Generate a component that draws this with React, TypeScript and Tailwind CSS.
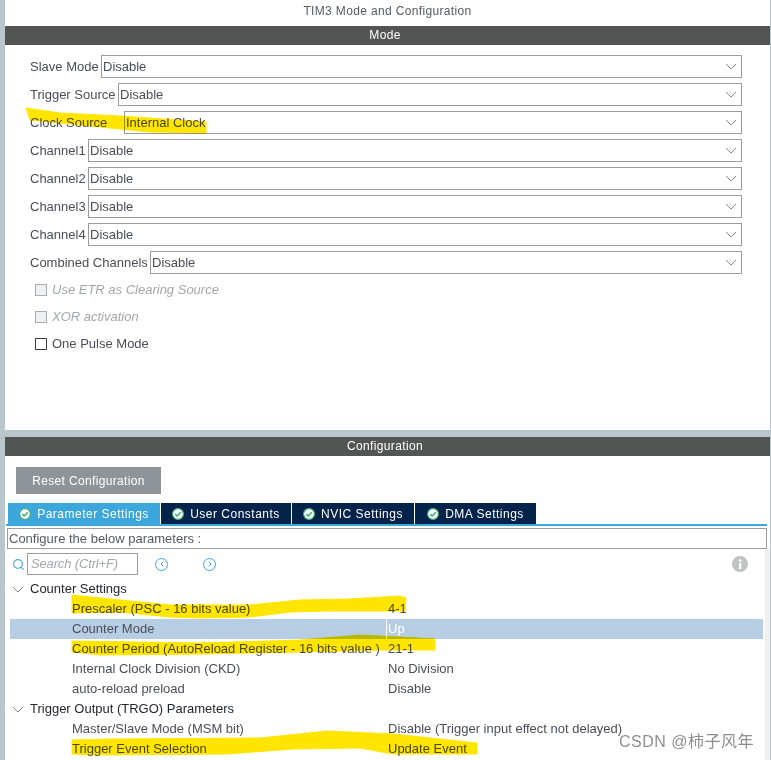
import React from 'react';
import { ChevronLeft, ChevronRight, Search } from 'lucide-react';

const modeRows = [
  { label: 'Slave Mode', value: 'Disable', w: 'w-[71px]' },
  { label: 'Trigger Source', value: 'Disable', w: 'w-[88px]' },
  { label: 'Clock Source', value: 'Internal Clock', w: 'w-[94px]' },
  { label: 'Channel1', value: 'Disable', w: 'w-[58px]' },
  { label: 'Channel2', value: 'Disable', w: 'w-[58px]' },
  { label: 'Channel3', value: 'Disable', w: 'w-[58px]' },
  { label: 'Channel4', value: 'Disable', w: 'w-[58px]' },
  { label: 'Combined Channels', value: 'Disable', w: 'w-[120px]' },
];

const tree = [
  { group: 'Counter Settings' },
  { name: 'Prescaler (PSC - 16 bits value)', value: '4-1' },
  { name: 'Counter Mode', value: 'Up', selected: true },
  { name: 'Counter Period (AutoReload Register - 16 bits value )', value: '21-1' },
  { name: 'Internal Clock Division (CKD)', value: 'No Division' },
  { name: 'auto-reload preload', value: 'Disable' },
  { group: 'Trigger Output (TRGO) Parameters' },
  { name: 'Master/Slave Mode (MSM bit)', value: 'Disable (Trigger input effect not delayed)' },
  { name: 'Trigger Event Selection', value: 'Update Event' },
];

const tabs = [
  { label: 'Parameter Settings', w: 'w-[152px]', active: true },
  { label: 'User Constants', w: 'w-[130px]' },
  { label: 'NVIC Settings', w: 'w-[122px]' },
  { label: 'DMA Settings', w: 'w-[121px]' },
];

function CheckBadge() {
  return (
    <svg width="12" height="12" viewBox="0 0 12 12" className="shrink-0">
      <circle cx="6" cy="6" r="5.4" fill="#ffffff" stroke="#3fae74" strokeWidth="1.2" />
      <path d="M3.2 6.1 L5.2 8 L8.8 4.3" fill="none" stroke="#3fae74" strokeWidth="1.6" />
    </svg>
  );
}

function Caret({ className }: { className?: string }) {
  return (
    <svg width="12" height="7" viewBox="0 0 12 7" className={className} fill="none" stroke="#85888c" strokeWidth="1">
      <path d="M1 1 L6 6 L11 1" />
    </svg>
  );
}

function PanelHeader({ title }: { title: string }) {
  return (
    <div className="h-[19px] bg-[#535554] text-white text-[12px] tracking-[0.35px] leading-[19px] text-center pr-[5px]">{title}</div>
  );
}

function Check({ label, disabled }: { label: string; disabled?: boolean }) {
  return (
    <div className="flex h-[27px] items-center pl-[30px] gap-[5px]">
      <div className={disabled ? 'w-[12px] h-[12px] border border-[#a9adb1] bg-[#eff0f1]' : 'w-[12px] h-[12px] border border-[#3d3f42] bg-white'} />
      <span className={disabled ? 'italic text-[#a3a7ab]' : 'text-[#4a4e5a]'}>{label}</span>
    </div>
  );
}

export default function App() {
  return (
    <div className="relative w-[771px] h-[760px] overflow-hidden bg-[#b9c7cd] pl-[5px] pr-px text-[13px] text-[#4a4e5a] font-['Liberation_Sans',Arial,sans-serif]">
      <section className="h-[430px] bg-white">
        <div className="h-[26px] leading-[23px] text-center text-[#555a63] text-[12px] tracking-[0.35px]">TIM3 Mode and Configuration</div>
        <PanelHeader title="Mode" />
        <div className="pt-[10px] pl-[25px] pr-[28px]">
          <div className="flex flex-col gap-[5px]">
            {modeRows.map((row) => (
              <div key={row.label} className="flex h-[23px] items-center">
                <span className={`${row.w} shrink-0 whitespace-nowrap`}>{row.label}</span>
                <div className="flex-1 h-[23px] border border-[#9a9da0] flex items-center justify-between pl-[1px] pr-[4px]">
                  <span>{row.value}</span>
                  <Caret />
                </div>
              </div>
            ))}
          </div>
        </div>
        <div className="pt-[2px]">
          <Check label="Use ETR as Clearing Source" disabled />
          <Check label="XOR activation" disabled />
          <Check label="One Pulse Mode" />
        </div>
      </section>

      <section className="mt-[7px] h-[323px] bg-white">
        <PanelHeader title="Configuration" />
        <div className="pt-[11px] pl-[11px]">
          <button className="block w-[145px] h-[27px] bg-[#8f9499] text-white tracking-[0.35px] text-[12px]">Reset Configuration</button>
        </div>
        <div className="flex mt-[9px] ml-[3px] gap-px">
          {tabs.map((tab) => (
            <div
              key={tab.label}
              className={`${tab.w} h-[21px] flex items-center justify-center gap-[6px] text-white text-[12px] tracking-[0.5px] ${tab.active ? 'bg-[#3ba7dc]' : 'bg-[#03234b]'}`}
            >
              <CheckBadge />
              {tab.label}
            </div>
          ))}
        </div>
        <div className="ml-[1px] mr-[3px] h-[2px] bg-[#3ba7dc]" />
        <div className="mt-[2px] mx-[2px] mr-[3px] h-[21px] border border-[#9a9da0] leading-[19px] pl-[1px] text-[#555a63]">Configure the below parameters :</div>

        <div className="flex h-[211px]">
          <div className="flex-1 min-w-0">
            <div className="flex items-center h-[22px] mt-[4px] ml-[8px]">
              <Search size={13} strokeWidth={2} className="text-[#3ba7dc] mr-[1px] -ml-px" />
              <div className="ml-px w-[111px] h-[22px] border border-[#9a9da0] leading-[20px] pl-[3px] italic text-[#a3a7ab] tracking-[-0.15px]">Search (Ctrl+F)</div>
              <div className="ml-[17px] w-[13px] h-[13px] rounded-full border-[1.5px] border-[#3ba7dc] flex items-center justify-center">
                <ChevronLeft size={8} strokeWidth={3} className="text-[#3ba7dc]" />
              </div>
              <div className="ml-[35px] w-[13px] h-[13px] rounded-full border-[1.5px] border-[#3ba7dc] flex items-center justify-center">
                <ChevronRight size={8} strokeWidth={3} className="text-[#3ba7dc]" />
              </div>
              <svg width="16" height="16" viewBox="0 0 16 16" className="ml-auto mr-[17px]">
                <circle cx="8" cy="8" r="8" fill="#c0c2c4" />
                <rect x="7" y="7" width="2.4" height="6" fill="#ffffff" />
                <circle cx="8.2" cy="4.6" r="1.4" fill="#ffffff" />
              </svg>
            </div>
            <div className="mt-[4px] pl-[5px] pr-[2px]">
              {tree.map((row) =>
                row.group ? (
                  <div key={row.group} className="flex items-center h-[20px] text-[#23272e]">
                    <Caret className="ml-[2px] mr-[6px] mt-[1px]" />
                    <span>{row.group}</span>
                  </div>
                ) : (
                  <div key={row.name} className={`flex items-center h-[20px] ${row.selected ? 'bg-[#b7cde4]' : ''}`}>
                    <span className="w-[376px] pl-[62px] shrink-0 whitespace-nowrap">{row.name}</span>
                    <span className={row.selected ? 'border-l border-white h-[20px] pl-px leading-[20px] text-white' : 'pl-[2px] whitespace-nowrap'}>{row.value}</span>
                  </div>
                )
              )}
            </div>
          </div>
          <div className="w-[5px] shrink-0 bg-[#f0f0f0]" />
        </div>
      </section>

      {/* marker strokes over the screenshot */}
      <svg width="771" height="760" className="absolute left-0 top-0 mix-blend-multiply pointer-events-none" fill="#ffe500" stroke="#ffe500" strokeWidth="1" strokeLinejoin="round">
        <path d="M26 108 L60 113 L120 116 L206 122 L206 133 L150 132 L100 127 L30 120 Z" />
        <path d="M72 595 L120 600 L170 605 L250 605 L300 600 L350 599 L400 596 L406 598 L405 611 L330 611 L290 612 L250 617 L200 618 L170 617 L120 612 L72 613 Z" />
        <path d="M72 641 L200 643 L300 640 L360 635 L400 637 L435 639 L435 650 L380 650 L300 652 L200 654 L100 655 L72 652 Z" />
        <path d="M72 740 L110 739 L260 738 L327 731 L393 734 L477 743 L477 754 L393 754 L360 748 L293 749 L227 754 L93 755 L72 754 Z" />
      </svg>

      <div className="absolute left-[619px] top-[733px] text-[16px] leading-[18px] tracking-[0.5px] text-[#8e8e8e] font-['Liberation_Sans','Noto_Sans_CJK_SC',sans-serif]">CSDN @柿子风年</div>
    </div>
  );
}
